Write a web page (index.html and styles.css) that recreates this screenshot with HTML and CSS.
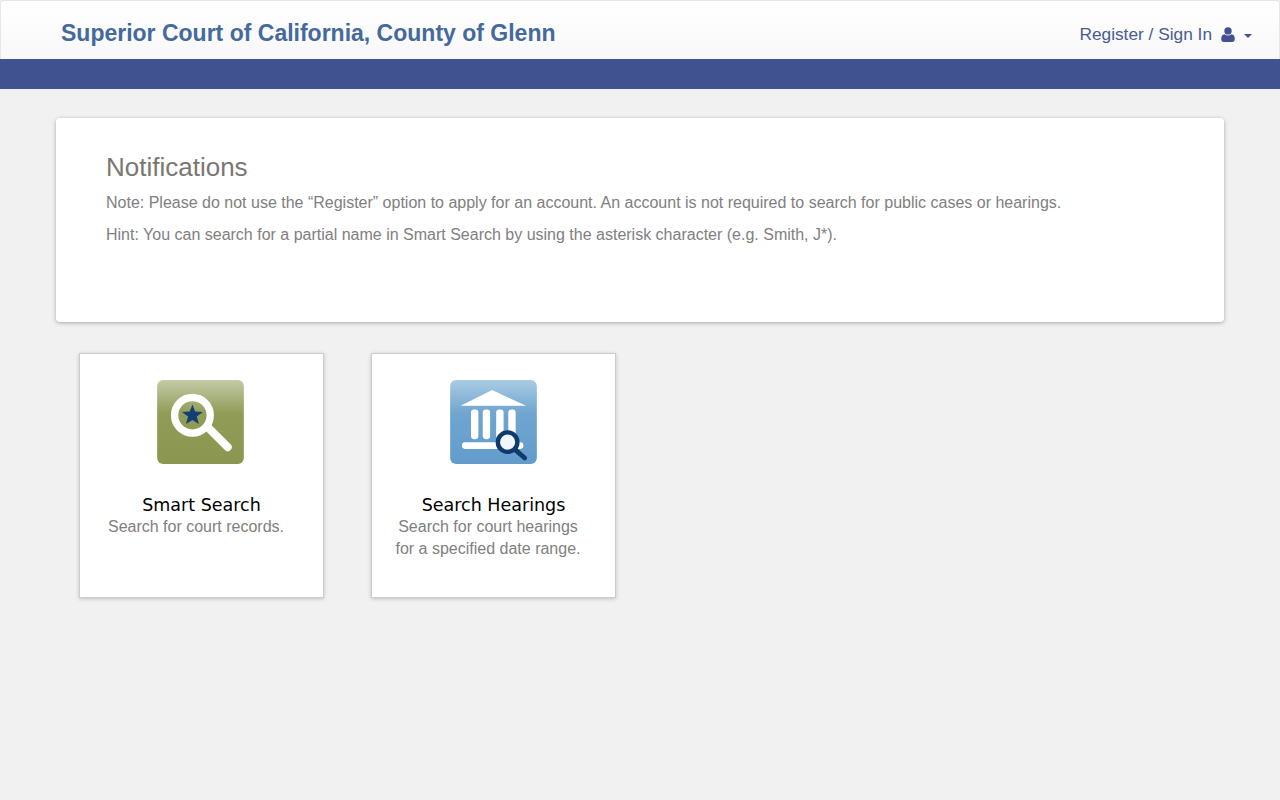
FILE: index.html
```html
<!DOCTYPE html>
<html lang="en">
<head>
  <meta charset="UTF-8" />
  <title>Superior Court of California, County of Glenn</title>
  <meta name="viewport" content="width=device-width, initial-scale=1" />
  <link rel="stylesheet" href="styles.css">
</head>

<body>
  <!-- top navbar -->
  <header class="navbar">
    <a class="navbar-brand" href="#">Superior Court of California, County of Glenn</a>
    <a class="navbar-user" href="#">
      <span>Register / Sign In</span>
      <svg class="user-icon" xmlns="http://www.w3.org/2000/svg" viewBox="0 0 14 15">
        <circle cx="7" cy="3.9" r="3.7" />
        <path d="M3.6 7.2C4.6 8 5.7 8.4 7 8.4s2.4-.4 3.400-1.200c2.100.2 3.400 1.800 3.400 4.700 0 1.900-1.100 3-2.700 3H2.900C1.300 14.900.2 13.800.2 11.900c0-2.900 1.300-4.500 3.400-4.700z" />
      </svg>
      <span class="caret"></span>
    </a>
  </header>
  <div class="nav-strip"></div>

  <main class="content">
    <!-- notifications -->
    <section class="panel">
      <h2>Notifications</h2>
      <p>Note: Please do not use the “Register” option to apply for an account. An account is not required to search for public cases or hearings.</p>
      <p>Hint: You can search for a partial name in Smart Search by using the asterisk character (e.g. Smith, J*).</p>
    </section>

    <!-- feature tiles -->
    <div class="tiles">
      <a class="tile" href="#">
        <svg class="tile-icon tile-icon-search" xmlns="http://www.w3.org/2000/svg" viewBox="0 0 258 250">
          <defs>
            <linearGradient id="greenGrad" x1="0" y1="0" x2="0" y2="1">
              <stop offset="0" stop-color="#c3cba8" />
              <stop offset="0.4" stop-color="#919c56" />
              <stop offset="1" stop-color="#8b9650" />
            </linearGradient>
          </defs>
          <rect width="258" height="250" rx="18" fill="url(#greenGrad)" />
          <line x1="152" y1="142" x2="210" y2="200" stroke="#fff" stroke-width="24" stroke-linecap="round" />
          <circle cx="105" cy="105" r="53" fill="none" stroke="#fff" stroke-width="22" />
          <polygon fill="#123f78" points="105,73 113,94 136,95 118,109 124,131 105,119 86,131 92,109 74,95 97,94" />
        </svg>
        <h3>Smart Search</h3>
        <p>Search for court records.</p>
      </a>
      <a class="tile" href="#">
        <svg class="tile-icon" xmlns="http://www.w3.org/2000/svg" viewBox="0 0 258 250">
          <defs>
            <linearGradient id="blueGrad" x1="0" y1="0" x2="0" y2="1">
              <stop offset="0" stop-color="#a9cbe3" />
              <stop offset="0.4" stop-color="#6fa5cf" />
              <stop offset="1" stop-color="#639ccb" />
            </linearGradient>
          </defs>
          <rect width="258" height="250" rx="18" fill="url(#blueGrad)" />
          <polygon fill="#fff" points="31,77 125,30 226,77" />
          <rect x="62" y="88" width="22" height="88" rx="9" fill="#fff" />
          <rect x="97" y="88" width="22" height="88" rx="9" fill="#fff" />
          <rect x="137" y="88" width="22" height="88" rx="9" fill="#fff" />
          <rect x="173" y="88" width="22" height="88" rx="9" fill="#fff" />
          <rect x="35" y="185" width="183" height="20" rx="9" fill="#fff" />
          <line x1="194" y1="208" x2="222" y2="232" stroke="#0f3a6e" stroke-width="14" stroke-linecap="round" />
          <circle cx="171" cy="185" r="29" fill="#f1f6fa" stroke="#0f3a6e" stroke-width="13" />
        </svg>
        <h3>Search Hearings</h3>
        <p>Search for court hearings<br />for a specified date range.</p>
      </a>
    </div>
  </main>
</body>
</html>
```

FILE: styles.css
```css
* { box-sizing: border-box; margin: 0; padding: 0; }

html, body {
  width: 100%;
  height: 100%;
  background: #f1f1f1;
  font-family: "Liberation Sans", Arial, sans-serif;
  color: #808080;
}

a { text-decoration: none; }

.navbar {
  height: 59px;
  display: flex;
  align-items: center;
  justify-content: space-between;
  padding: 6px 27px 0 60px;
  background: linear-gradient(to bottom, #ffffff 0%, #f8f8f8 100%);
  border: 1px solid #e7e7e7;
  border-bottom: none;
  border-radius: 4px 4px 0 0;
}

.navbar-brand {
  font-size: 23px;
  font-weight: 700;
  color: #44699c;
}

.navbar-user {
  display: flex;
  align-items: center;
  margin-top: 3px;
  font-size: 17.3px;
  color: #4a5a92;
}

.user-icon {
  width: 14px;
  height: 15px;
  margin: 0 9px 0 9px;
  fill: #415291;
}

.caret {
  width: 0;
  height: 0;
  border-top: 4px solid #415291;
  border-left: 4px solid transparent;
  border-right: 4px solid transparent;
  margin-top: 2px;
}

.nav-strip {
  height: 30px;
  background: #415291;
}

.content {
  padding: 29px 56px 0;
}

.panel {
  height: 204px;
  padding: 34px 50px;
  background: #fff;
  border-radius: 4px;
  box-shadow: 0 1px 4px rgba(0, 0, 0, 0.3);
}

.panel h2 {
  font-size: 26px;
  font-weight: 400;
  line-height: 30px;
  color: #7a7772;
}

.panel p {
  font-size: 16px;
  line-height: 22px;
  margin-top: 10px;
  margin-bottom: 10px;
}

.panel p + p { margin-top: 0; }

.tiles {
  display: flex;
  gap: 47px;
  margin: 31px 0 0 23px;
}

.tile {
  width: 245px;
  height: 245px;
  display: block;
  padding-top: 26px;
  text-align: center;
  background: #fff;
  border: 1px solid #ccc;
  box-shadow: 0 1px 4px rgba(0, 0, 0, 0.2);
}

.tile-icon {
  display: block;
  width: 87px;
  height: 84px;
  margin: 0 auto;
}

.tile-icon-search { margin-left: 77px; }

.tile h3 {
  margin-top: 31px;
  font-family: "DejaVu Sans", Verdana, sans-serif;
  font-size: 17.5px;
  font-weight: 400;
  line-height: 21px;
  color: #000;
}

.tile p {
  font-size: 16px;
  line-height: 22px;
  padding-right: 11px;
  color: #808080;
}
```
